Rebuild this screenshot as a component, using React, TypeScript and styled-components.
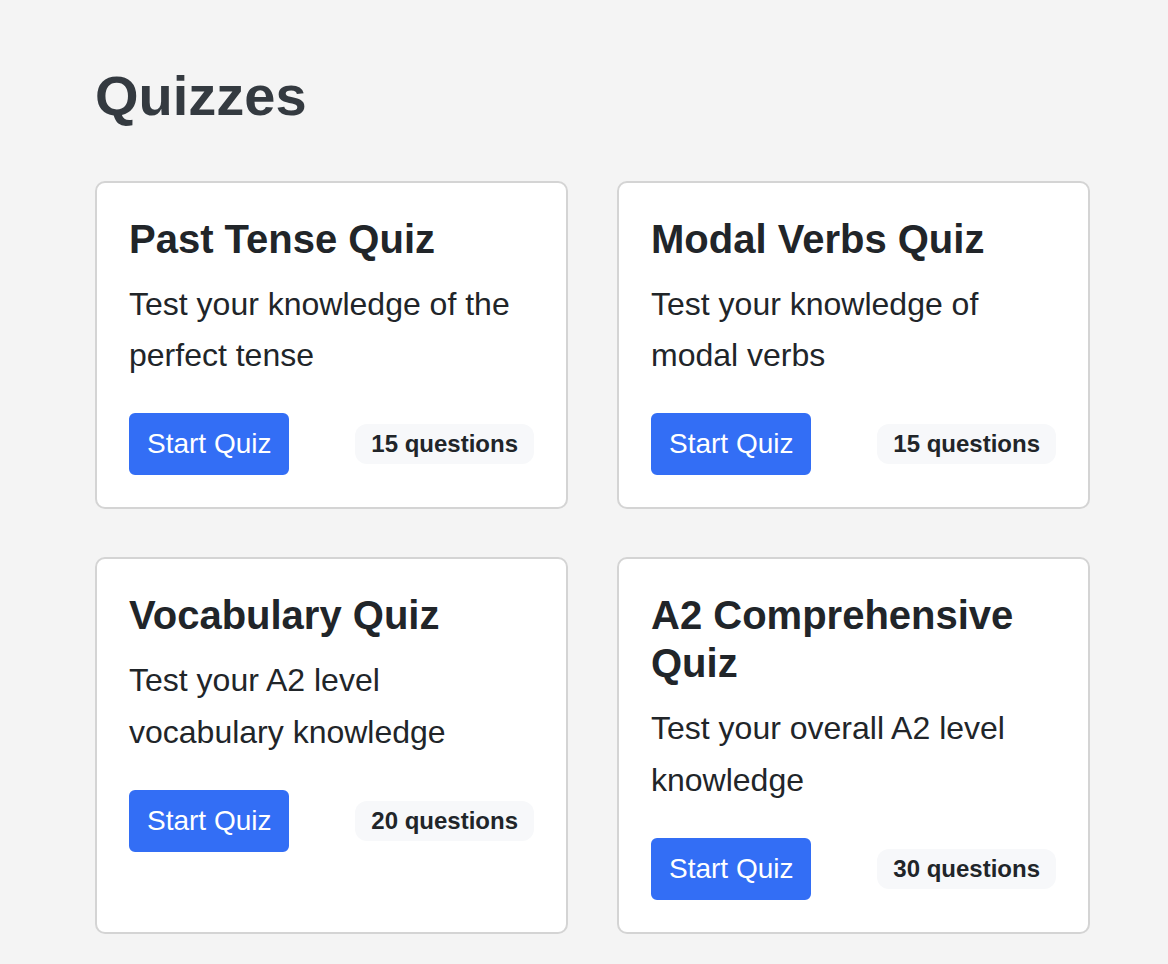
import React from "react";
import styled, { createGlobalStyle } from "styled-components";

const GlobalStyle = createGlobalStyle`
  html, body {
    margin: 0;
    padding: 0;
    background: #f4f4f4;
  }
  body {
    font-family: "Liberation Sans", Arial, Helvetica, sans-serif;
    color: #212529;
  }
  * { box-sizing: border-box; }
`;

const Page = styled.main`
  padding: 62px 0 40px 95px;
  width: 1090px;
`;

const Heading = styled.h2`
  margin: 0 0 51.8px;
  font-size: 56px;
  line-height: 1.2;
  font-weight: 700;
  color: #343a40;
`;

const Grid = styled.div`
  display: grid;
  grid-template-columns: 473px 473px;
  column-gap: 49px;
  row-gap: 48px;
`;

const Card = styled.div`
  background: #ffffff;
  border: 2px solid #d4d4d4;
  border-radius: 10px;
  padding: 32px;
`;

const Title = styled.h5`
  margin: 0 0 16px;
  font-size: 40px;
  line-height: 1.2;
  font-weight: 700;
  color: #212529;
`;

const Description = styled.p`
  margin: 0 0 32px;
  font-size: 32px;
  line-height: 1.6;
  color: #212529;
`;

const Footer = styled.div`
  display: flex;
  align-items: center;
  justify-content: space-between;
`;

const StartButton = styled.button`
  font-family: inherit;
  font-size: 28px;
  line-height: 42px;
  padding: 8px 16px;
  border: 2px solid #336ef5;
  border-radius: 6px;
  background: #336ef5;
  color: #ffffff;
  cursor: pointer;
`;

const Badge = styled.span`
  display: inline-block;
  font-size: 24px;
  line-height: 1;
  font-weight: 700;
  padding: 8px 16px;
  border-radius: 12px;
  background: #f7f8fa;
  color: #212529;
`;

const quizzes = [
  { title: "Past Tense Quiz", desc: "Test your knowledge of the perfect tense", count: 15 },
  { title: "Modal Verbs Quiz", desc: "Test your knowledge of modal verbs", count: 15 },
  { title: "Vocabulary Quiz", desc: "Test your A2 level vocabulary knowledge", count: 20 },
  { title: "A2 Comprehensive Quiz", desc: "Test your overall A2 level knowledge", count: 30 },
];

export default function App() {
  return (
    <>
      <GlobalStyle />
      <Page>
        <Heading>Quizzes</Heading>
        <Grid>
          {quizzes.map((q) => (
            <Card key={q.title}>
              <Title>{q.title}</Title>
              <Description>{q.desc}</Description>
              <Footer>
                <StartButton>Start Quiz</StartButton>
                <Badge>{q.count} questions</Badge>
              </Footer>
            </Card>
          ))}
        </Grid>
      </Page>
    </>
  );
}
